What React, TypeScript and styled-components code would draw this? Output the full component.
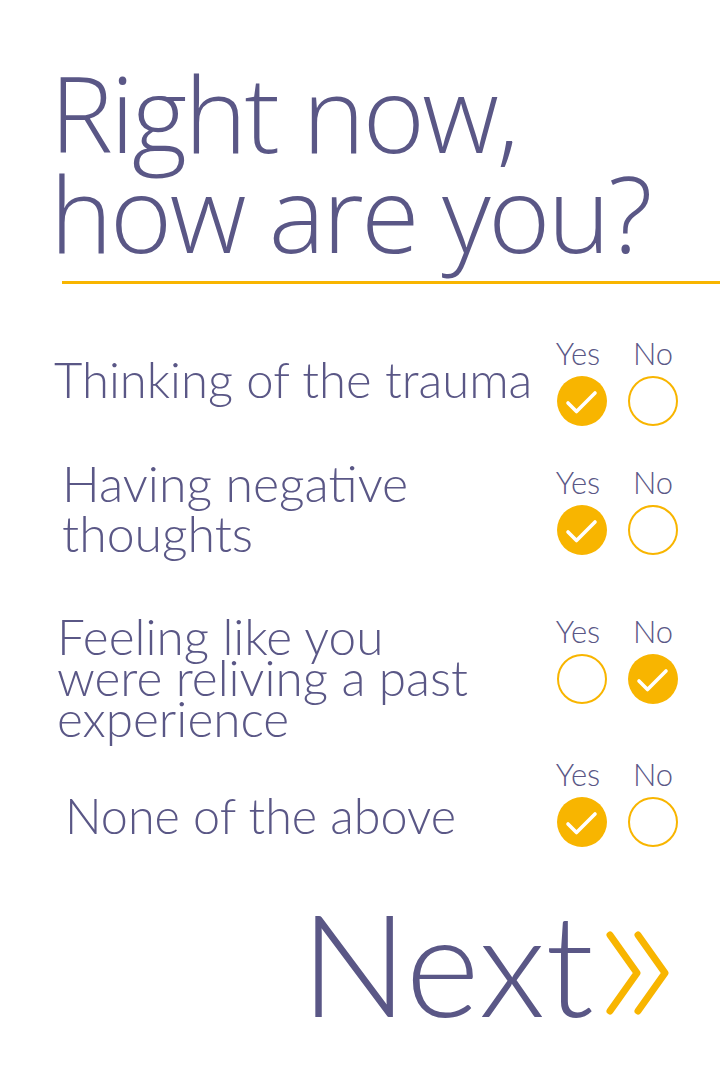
import React from "react";
import styled, { createGlobalStyle } from "styled-components";

const PURPLE = "#5a5786";
const YELLOW = "#f8b500";

const GlobalStyle = createGlobalStyle`
  html, body {
    margin: 0;
    padding: 0;
    background: #ffffff;
  }
  body {
    font-family: "Lato", "Open Sans", sans-serif;
    color: ${PURPLE};
  }
`;

const Page = styled.main`
  width: 720px;
  height: 1080px;
  box-sizing: border-box;
  overflow: hidden;
  display: flex;
  flex-direction: column;
`;

const Heading = styled.h1`
  margin: 62px 0 0 0;
  padding-left: 50px;
  font-family: "Open Sans", "Lato", sans-serif;
  font-weight: 300;
  font-size: 106px;
  line-height: 100px;
  letter-spacing: -2.5px;
  color: ${PURPLE};
`;

const Divider = styled.hr`
  margin: 19px 0 0 62px;
  border: none;
  height: 3px;
  background: ${YELLOW};
`;

const Questions = styled.section`
  display: flex;
  flex-direction: column;
  padding-right: 42px;
`;

const Row = styled.div<{ $top: number }>`
  display: grid;
  grid-template-columns: 1fr auto;
  align-items: start;
  margin-top: ${(p) => p.$top}px;
`;

const Label = styled.p<{ $indent: number; $offset: number; $size: number; $lh: number }>`
  margin: ${(p) => p.$offset}px 0 0 ${(p) => p.$indent}px;
  font-family: "Lato", sans-serif;
  font-weight: 300;
  font-size: ${(p) => p.$size}px;
  line-height: ${(p) => p.$lh}px;
  color: ${PURPLE};
`;

const Options = styled.div<{ $offset: number }>`
  margin-top: ${(p) => p.$offset}px;
  display: grid;
  grid-template-columns: 50px 50px;
  column-gap: 21px;
  row-gap: 8px;
`;

const OptionTitle = styled.span<{ $shift?: number }>`
  justify-self: center;
  margin-right: ${(p) => p.$shift ?? 0}px;
  font-family: "Lato", sans-serif;
  font-weight: 300;
  font-size: 31px;
  line-height: 30px;
  color: ${PURPLE};
`;

const Circle = styled.div<{ $checked: boolean }>`
  width: 50px;
  height: 50px;
  box-sizing: border-box;
  border-radius: 50%;
  display: flex;
  align-items: center;
  justify-content: center;
  background: ${(p) => (p.$checked ? YELLOW : "#ffffff")};
  border: ${(p) => (p.$checked ? "none" : `2px solid ${YELLOW}`)};
`;

const NextRow = styled.div`
  margin-top: 44px;
  display: flex;
  justify-content: flex-end;
  align-items: flex-start;
  padding-right: 50px;
`;

const NextText = styled.span`
  font-family: "Lato", sans-serif;
  font-weight: 300;
  font-size: 142px;
  line-height: 142px;
  color: ${PURPLE};
`;

const Chevrons = styled.svg`
  margin-top: 40px;
  margin-left: 10px;
  flex: none;
`;

const Check = () => (
  <svg width="50" height="50" viewBox="0 0 50 50">
    <path
      d="M11 27 L19.5 35.5 L38 17"
      fill="none"
      stroke="#ffffff"
      strokeWidth="3.6"
      strokeLinecap="round"
      strokeLinejoin="round"
    />
  </svg>
);

type Q = {
  lines: string[];
  answer: "yes" | "no";
  top: number;
  indent: number;
  textOffset: number;
  optOffset: number;
  size: number;
  lh: number;
};

const questions: Q[] = [
  { lines: ["Thinking of the trauma"], answer: "yes", top: 54, indent: 54, textOffset: 16, optOffset: 0, size: 49, lh: 50 },
  { lines: ["Having negative", "thoughts"], answer: "yes", top: 32, indent: 62, textOffset: 0, optOffset: 9, size: 50, lh: 50 },
  { lines: ["Feeling like you", "were reliving a past", "experience"], answer: "no", top: 58, indent: 57, textOffset: 0, optOffset: 0, size: 49.5, lh: 41 },
  { lines: ["None of the above"], answer: "yes", top: 20, indent: 65, textOffset: 31, optOffset: 0, size: 48.5, lh: 50 },
];

export default function App() {
  return (
    <>
      <GlobalStyle />
      <Page>
        <Heading>
          Right now,
          <br />
          how are you?
        </Heading>
        <Divider />
        <Questions>
          {questions.map((q, i) => (
            <Row key={i} $top={q.top}>
              <Label $indent={q.indent} $offset={q.textOffset} $size={q.size} $lh={q.lh}>
                {q.lines.map((l, j) => (
                  <React.Fragment key={j}>
                    {j > 0 && <br />}
                    {l}
                  </React.Fragment>
                ))}
              </Label>
              <Options $offset={q.optOffset}>
                <OptionTitle $shift={8}>Yes</OptionTitle>
                <OptionTitle>No</OptionTitle>
                <Circle $checked={q.answer === "yes"}>{q.answer === "yes" && <Check />}</Circle>
                <Circle $checked={q.answer === "no"}>{q.answer === "no" && <Check />}</Circle>
              </Options>
            </Row>
          ))}
        </Questions>
        <NextRow>
          <NextText>Next</NextText>
          <Chevrons width="66" height="84" viewBox="0 0 66 84">
            <path d="M6 4 L33 42 L6 80" fill="none" stroke={YELLOW} strokeWidth="7" strokeLinecap="round" strokeLinejoin="round" />
            <path d="M34 4 L61 42 L34 80" fill="none" stroke={YELLOW} strokeWidth="7" strokeLinecap="round" strokeLinejoin="round" />
          </Chevrons>
        </NextRow>
      </Page>
    </>
  );
}
